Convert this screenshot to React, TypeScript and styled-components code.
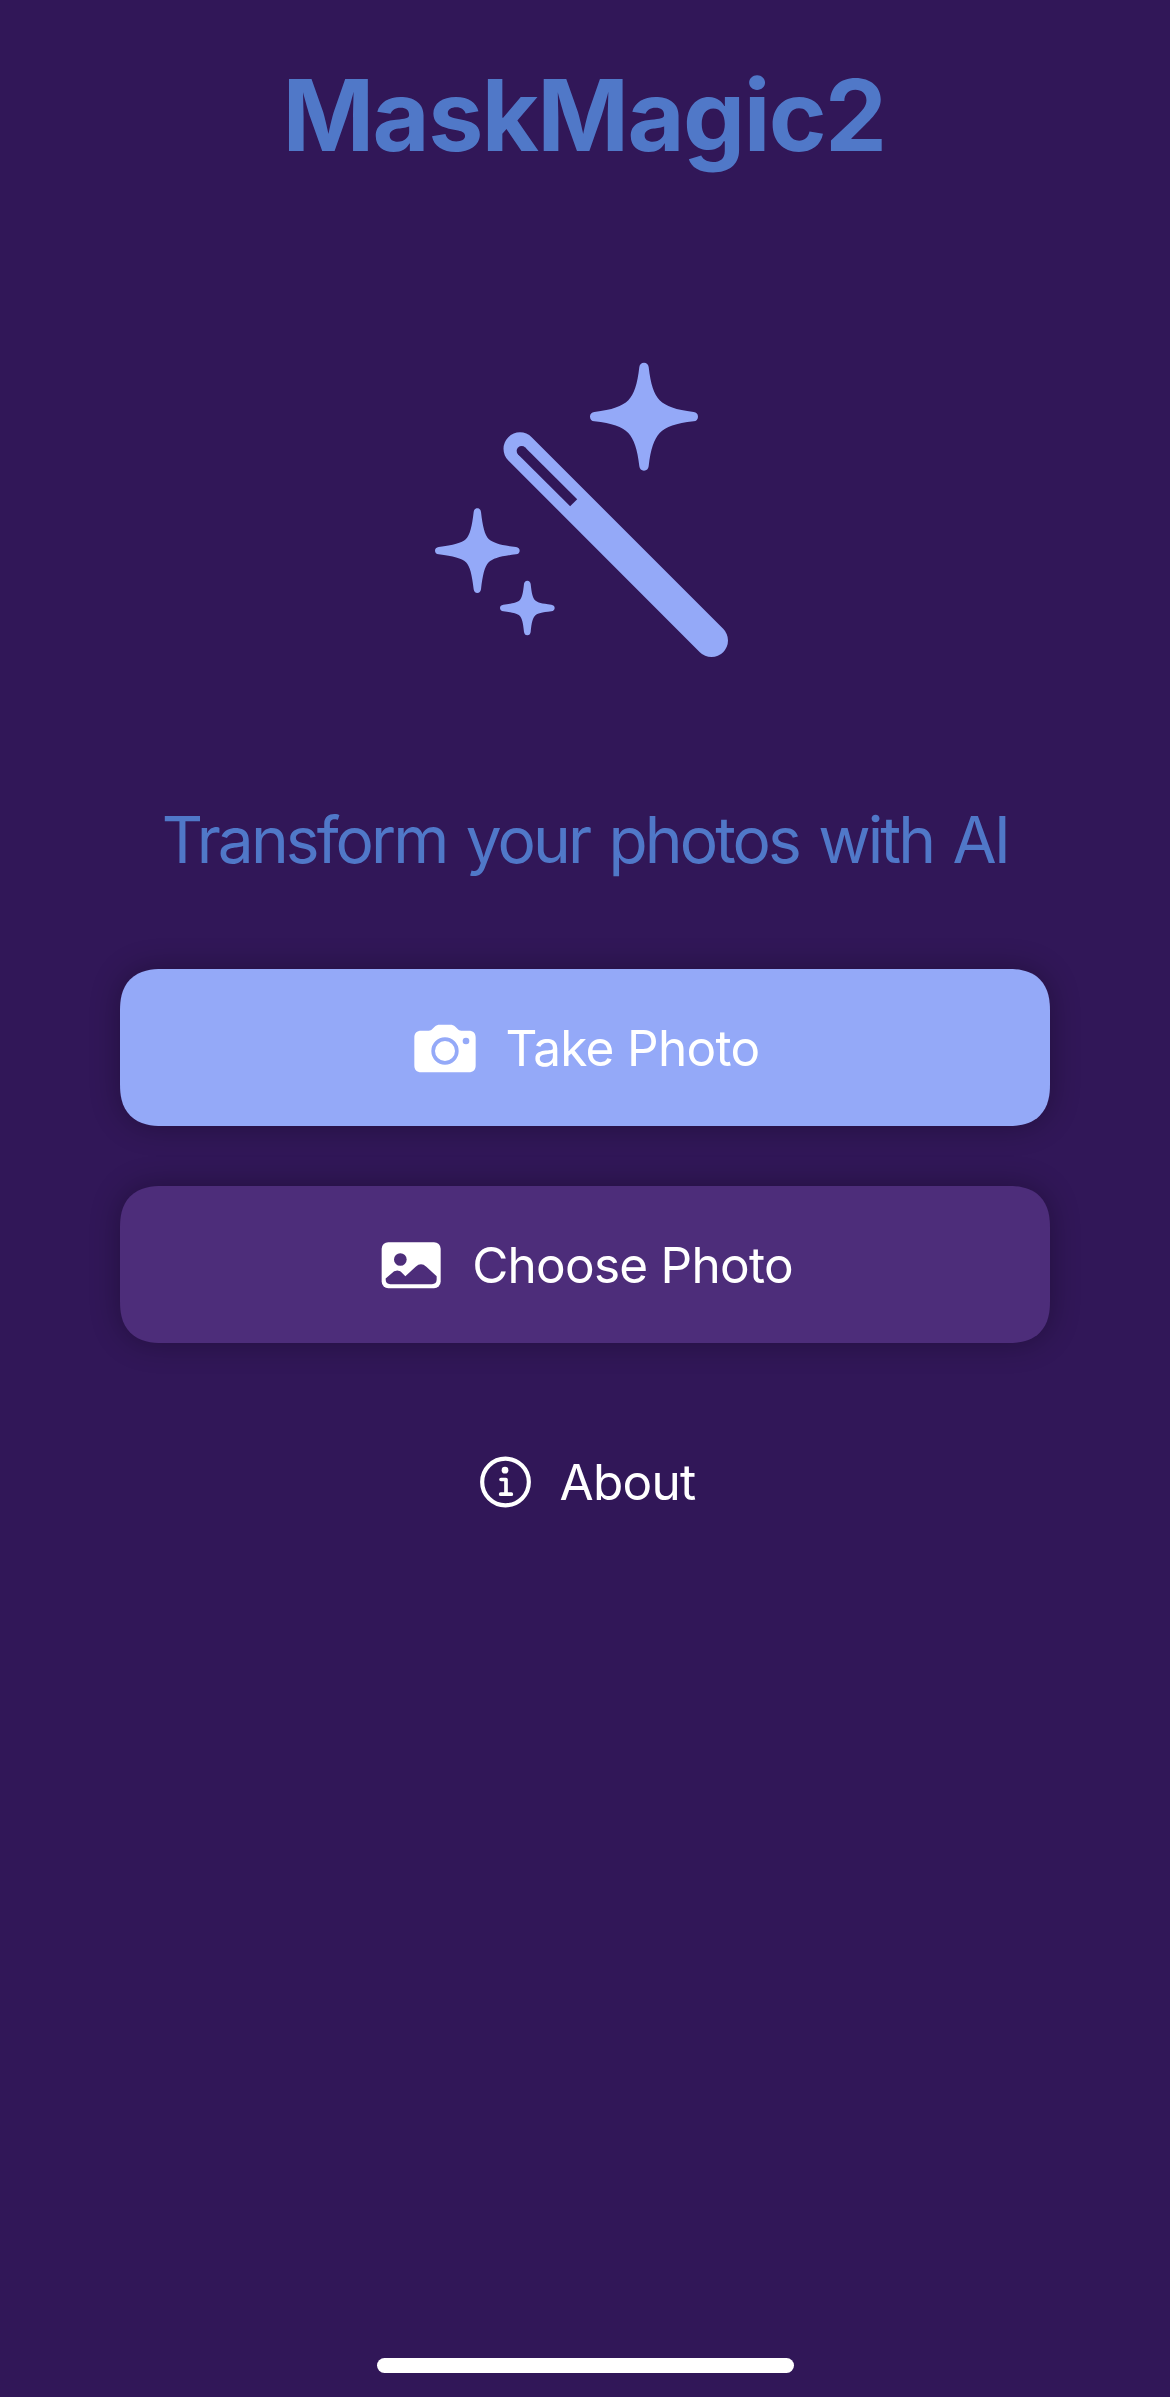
import React from "react";
import styled, { createGlobalStyle } from "styled-components";

const GlobalStyle = createGlobalStyle`
  body {
    margin: 0;
    background: #311758;
  }
`;

const Screen = styled.main`
  box-sizing: border-box;
  display: flex;
  flex-direction: column;
  align-items: center;
  width: 1170px;
  height: 2397px;
  padding: 55px 120px 24px;
  overflow: hidden;
  background: #311758;
  font-family: Inter, "Liberation Sans", sans-serif;
`;

const Title = styled.h1`
  margin: 0;
  color: #5078c8;
  font-size: 98.5px;
  font-weight: 700;
  line-height: 122px;
  letter-spacing: -1.6px;
  margin-right: 2px;
  white-space: nowrap;
`;

const Wand = styled.svg`
  display: block;
  flex: none;
  width: 320px;
  height: 320px;
  margin-top: 173px;
`;

const Subtitle = styled.p`
  margin: 130px 0 0;
  color: #5078c8;
  font-size: 64px;
  font-weight: 400;
  line-height: 80px;
  letter-spacing: -2.9px;
  word-spacing: 4.2px;
  white-space: nowrap;
`;

const Actions = styled.div`
  display: flex;
  flex-direction: column;
  gap: 60px;
  width: 100%;
  margin-top: 89px;
`;

const ActionButton = styled.button<{ $fill?: string }>`
  display: flex;
  align-items: center;
  justify-content: center;
  width: 100%;
  height: 157px;
  padding: 0;
  border: 0;
  border-radius: 36px;
  background: ${(p) => p.$fill ?? "transparent"};
  box-shadow: ${(p) => (p.$fill ? "0 0 30px rgba(0, 0, 0, 0.3)" : "none")};
  color: #fff;
  font: inherit;

  @supports (corner-shape: superellipse(1.3)) {
    border-radius: 42px;
    corner-shape: superellipse(1.3);
  }
`;

const Icon = styled.svg<{ $width: number }>`
  display: block;
  flex: none;
  width: ${(p) => p.$width}px;
  height: 60px;
`;

const Label = styled.span<{ $tracking: number }>`
  margin-left: 27px;
  padding-top: 2px;
  font-size: 49.5px;
  line-height: 61px;
  letter-spacing: ${(p) => p.$tracking}px;
  white-space: nowrap;
`;

const HomeIndicator = styled.div`
  width: 417px;
  height: 15px;
  margin-top: auto;
  border-radius: 8px;
  background: #fff;
`;

const WandIcon = () => (
  <Wand viewBox="15 0 960 960" fill="#94a9f8" aria-hidden="true">
    <path d="M300 296.500L874.500 871.500" stroke="#94a9f8" strokeWidth="99" strokeLinecap="round" />
    <path d="M305 303L461 458.500" stroke="#311758" strokeWidth="30" />
    <circle cx="305" cy="303" r="15" fill="#311758" />
    <path
      transform="translate(672 200)"
      d="M0-162C8-162 13-157 14-149C20-96 30-68 47-49C66-31 95-20 149-14C157-13 162-8 162 0S157 13 149 14C95 20 66 31 47 49C30 68 20 96 14 149C13 157 8 162 0 162S-13 157-14 149C-20 96-30 68-47 49C-66 31-95 20-149 14C-157 13-162 8-162 0S-157-13-149-14C-95-20-66-31-47-49C-30-68-20-96-14-149C-13-157-8-162 0-162Z"
    />
    <path
      transform="translate(172 602)"
      d="M0-127C6-127 10-123 11-116C16-72 22-48 34-35C47-23 72-16 116-11C123-10 127-6 127 0S123 10 116 11C72 16 47 23 34 35C22 48 16 72 11 116C10 123 6 127 0 127S-10 123-11 116C-16 72-22 48-34 35C-47 23-72 16-116 11C-123 10-127 6-127 0S-123-10-116-11C-72-16-47-23-34-35C-22-48-16-72-11-116C-10-123-6-127 0-127Z"
    />
    <path
      transform="translate(322 774)"
      d="M0-82C6-82 9-78 10-72C13-43 16-31 23-23C31-16 43-13 72-10C78-9 82-6 82 0S78 9 72 10C43 13 31 16 23 23C16 31 13 43 10 72C9 78 6 82 0 82S-9 78-10 72C-13 43-16 31-23 23C-31 16-43 13-72 10C-78 9-82 6-82 0S-78-9-72-10C-43-13-31-16-23-23C-16-31-13-43-10-72C-9-78-6-82 0-82Z"
    />
  </Wand>
);

const CameraIcon = () => (
  <Icon $width={68} viewBox="35 23 204 180" fill="#fff" aria-hidden="true">
    <path d="M66 61H88C93 61 96 59 99 56L106 49C111 44 115 43 122 43H152C159 43 163 44 168 49L175 56C178 59 181 61 186 61H208C222 61 229 68 229 82V165C229 179 222 186 208 186H66C52 186 45 179 45 165V82C45 68 52 61 66 61Z" />
    <circle cx="137" cy="122" r="35.500" stroke="#94a9f8" strokeWidth="11" />
    <circle cx="200" cy="92" r="10" fill="#94a9f8" />
  </Icon>
);

const PhotoIcon = () => (
  <Icon $width={68} viewBox="22 29.500 204 180" fill="#fff" aria-hidden="true">
    <rect x="36" y="51" width="177" height="138" rx="20" />
    <g fill="#4d2d7a">
      <circle cx="92" cy="103" r="19" />
      <path d="M48 160L69 142C78 134 88 134 96 142L107 153L138 125C149 115 159 115 170 125L201 153V163C201 172 196 177 187 177H62C53 177 48 172 48 163Z" />
    </g>
  </Icon>
);

const InfoIcon = () => (
  <Icon $width={58} viewBox="42 34.500 174 180" fill="none" stroke="#fff" aria-hidden="true">
    <circle cx="133.500" cy="124.500" r="70" strokeWidth="12.500" />
    <circle cx="132" cy="89" r="10" fill="#fff" stroke="none" />
    <path d="M120 117H135V161M119 161H151" strokeWidth="11" strokeLinecap="round" strokeLinejoin="round" />
  </Icon>
);

export default function App() {
  return (
    <>
      <GlobalStyle />
      <Screen>
        <Title>MaskMagic2</Title>
        <WandIcon />
        <Subtitle>Transform your photos with AI</Subtitle>
        <Actions>
          <ActionButton $fill="#94a9f8">
            <CameraIcon />
            <Label $tracking={-0.7}>Take Photo</Label>
          </ActionButton>
          <ActionButton $fill="#4d2d7a">
            <PhotoIcon />
            <Label $tracking={-0.75}>Choose Photo</Label>
          </ActionButton>
          <ActionButton>
            <InfoIcon />
            <Label $tracking={-0.75}>About</Label>
          </ActionButton>
        </Actions>
        <HomeIndicator />
      </Screen>
    </>
  );
}
